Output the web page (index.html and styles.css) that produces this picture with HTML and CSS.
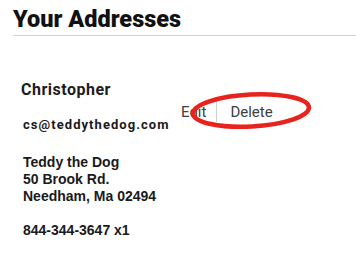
FILE: index.html
```html
<!DOCTYPE html>
<html lang="en">
<head>
<meta charset="utf-8">
<title>Your Addresses</title>
<link rel="stylesheet" href="styles.css">
</head>
<body>
<main class="page">
  <h1 class="title">Your Addresses</h1>
  <hr class="rule">
  <section class="card">
    <h2 class="name">Christopher</h2>
    <div class="actions">
      <button class="action action-edit" type="button">Edit</button>
      <span class="sep"></span>
      <button class="action action-delete" type="button">Delete</button>
    </div>
    <p class="email">cs@teddythedog.com</p>
    <address class="addr">Teddy the Dog<br>50 Brook Rd.<br>Needham, Ma 02494<br><br>844-344-3647 x1</address>
    <svg class="circle" width="126" height="40" viewBox="0 0 126 40" aria-hidden="true">
      <ellipse cx="63" cy="19.5" rx="58" ry="16" fill="none" stroke="#e8221d" stroke-width="4.5" transform="rotate(-3 63 19.5)"/>
    </svg>
  </section>
</main>
</body>
</html>
```

FILE: styles.css
```css
html, body {
  margin: 0;
  padding: 0;
  background: #ffffff;
}

.page {
  width: 356px;
  height: 265px;
  overflow: hidden;
  font-family: Roboto, "Liberation Sans", sans-serif;
  color: #111;
}

.title {
  margin: 0;
  padding: 6px 0 0 13px;
  font-size: 23.5px;
  line-height: 27px;
  font-weight: 900;
  color: #111;
}

.rule {
  margin: 2px 0 0 13px;
  border: 0;
  border-top: 1px solid #d2d2d2;
  height: 0;
}

.card {
  position: relative;
  padding: 45px 0 0 21px;
}

.name {
  margin: 0;
  font-size: 16px;
  line-height: 18px;
  font-weight: 700;
  letter-spacing: 0.5px;
  color: #1c1c1c;
}

.actions {
  display: flex;
  align-items: stretch;
  height: 21px;
  margin: 0 0 -4px 160px;
  padding-top: 1px;
}

.action {
  border: 0;
  background: none;
  padding: 0;
  font-family: Roboto, "Liberation Sans", sans-serif;
  font-size: 15px;
  line-height: 24px;
  color: #404040;
}

.action-edit {
  padding-right: 10px;
}

.action-delete {
  padding-left: 13px;
}

.sep {
  width: 1px;
  background: #cfcfcf;
  margin-bottom: -1px;
}

.email {
  margin: 0;
  padding-left: 2px;
  font-size: 13px;
  line-height: 15px;
  font-weight: 700;
  letter-spacing: 1.05px;
  color: #1a1a1a;
}

.addr {
  margin: 22px 0 0;
  padding-left: 2px;
  font-style: normal;
  font-family: "Liberation Sans", Arial, sans-serif;
  font-size: 14px;
  line-height: 17px;
  font-weight: 700;
  color: #1a1a1a;
}

.circle {
  position: absolute;
  left: 188px;
  top: 55px;
}
```
